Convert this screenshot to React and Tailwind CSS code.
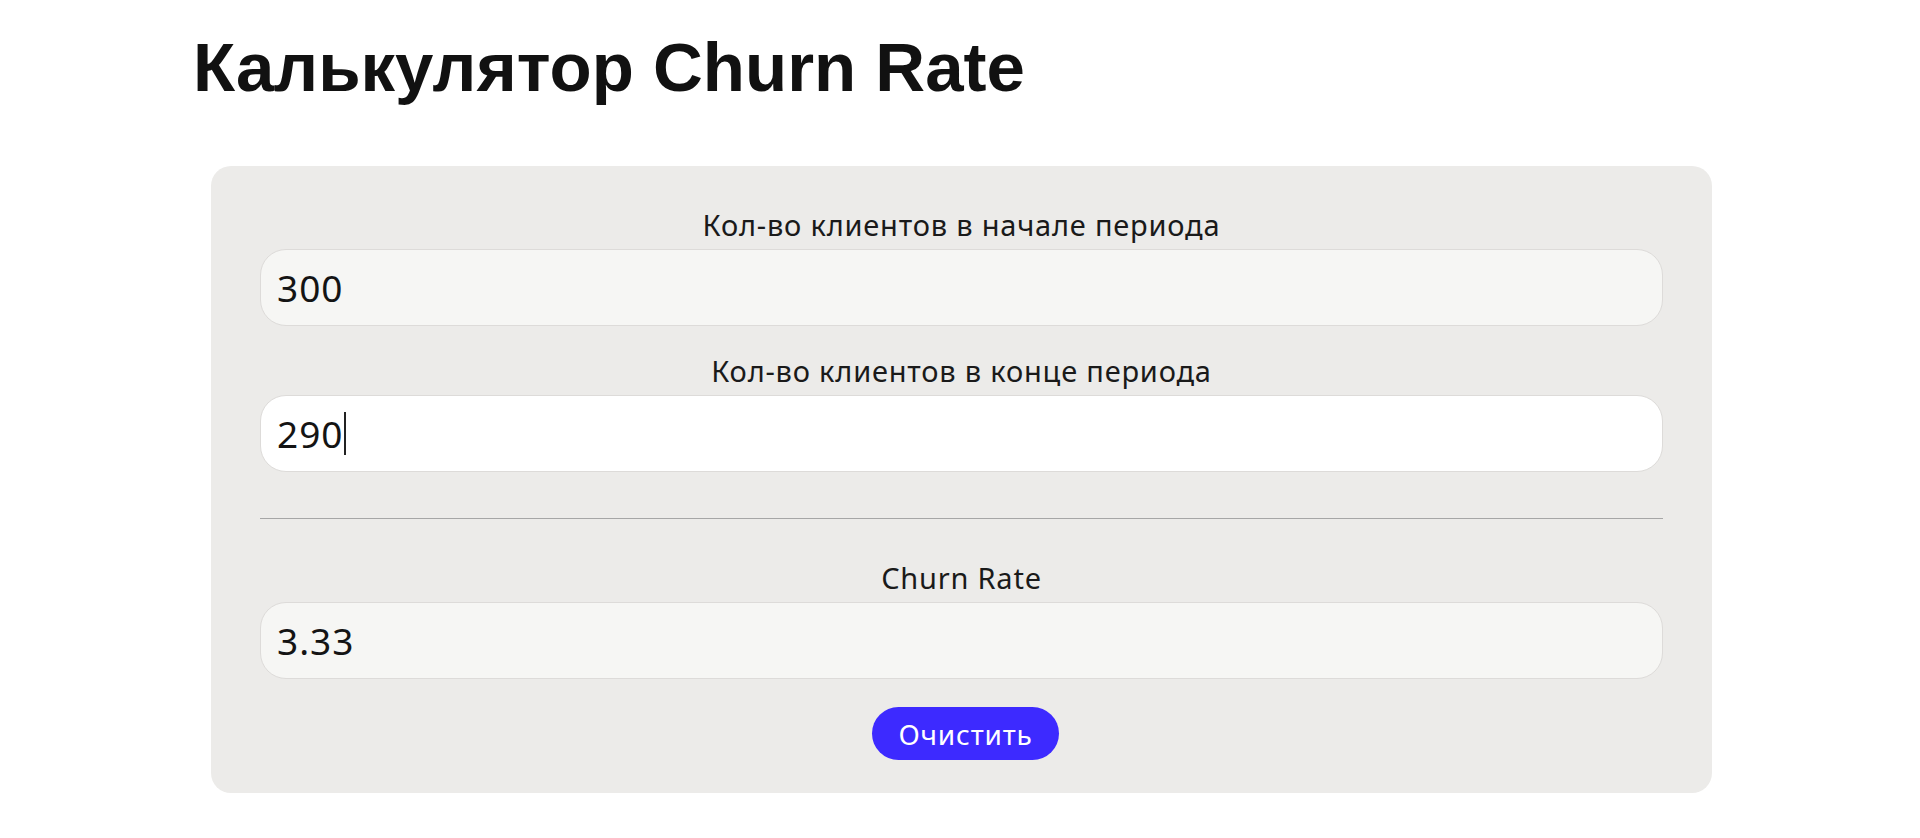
import { useState } from "react";

// Churn rate calculator: two client counts in, percentage out.
function Field({ label, value, white, caret }) {
  return (
    <div className="flex flex-col">
      <label className="text-center text-[29px] leading-[32px] tracking-[0.8px] text-[#1a1a1a] mb-2">{label}</label>
      <div
        className={`h-[77px] rounded-[26px] border border-[#dddbd9] flex items-center pl-[16px] text-[37px] tracking-[1px] text-[#141414] ${
          white ? "bg-white" : "bg-[#f6f6f4]"
        }`}
      >
        <span>{value}</span>
        {caret && <span className="inline-block w-[2px] h-[43px] bg-[#222]" />}
      </div>
    </div>
  );
}

export default function App() {
  const [start, setStart] = useState("300");
  const [end, setEnd] = useState("290");

  const s = parseFloat(start);
  const e = parseFloat(end);
  const rate = s > 0 && !isNaN(e) ? (((s - e) / s) * 100).toFixed(2) : "";

  return (
    <div className="min-h-screen bg-white font-['Noto_Sans',sans-serif]">
      <div className="pl-[193px] pt-[33px]">
        <h1 className="font-['Liberation_Sans',Arial,sans-serif] font-bold text-[69px] leading-none text-[#111]">
          Калькулятор Churn Rate
        </h1>
      </div>

      <div className="ml-[211px] mt-[64px] w-[1501px] rounded-[20px] bg-[#ecebe9] px-[49px] pt-[43px] pb-[33px]">
        <Field label="Кол-во клиентов в начале периода" value={start} />
        <div className="mt-[29px]">
          <Field label="Кол-во клиентов в конце периода" value={end} white caret />
        </div>

        <hr className="mt-[46px] border-0 h-px bg-[#a6a6a6]" />

        <div className="mt-[43px]">
          <Field label="Churn Rate" value={rate} />
        </div>

        <div className="mt-[28px] flex justify-center">
          <button
            onClick={() => {
              setStart("");
              setEnd("");
            }}
            className="ml-[8px] h-[53px] w-[187px] rounded-full bg-[#3d2aff] text-white text-[28px] tracking-[0.8px] leading-none"
          >
            Очистить
          </button>
        </div>
      </div>
    </div>
  );
}
